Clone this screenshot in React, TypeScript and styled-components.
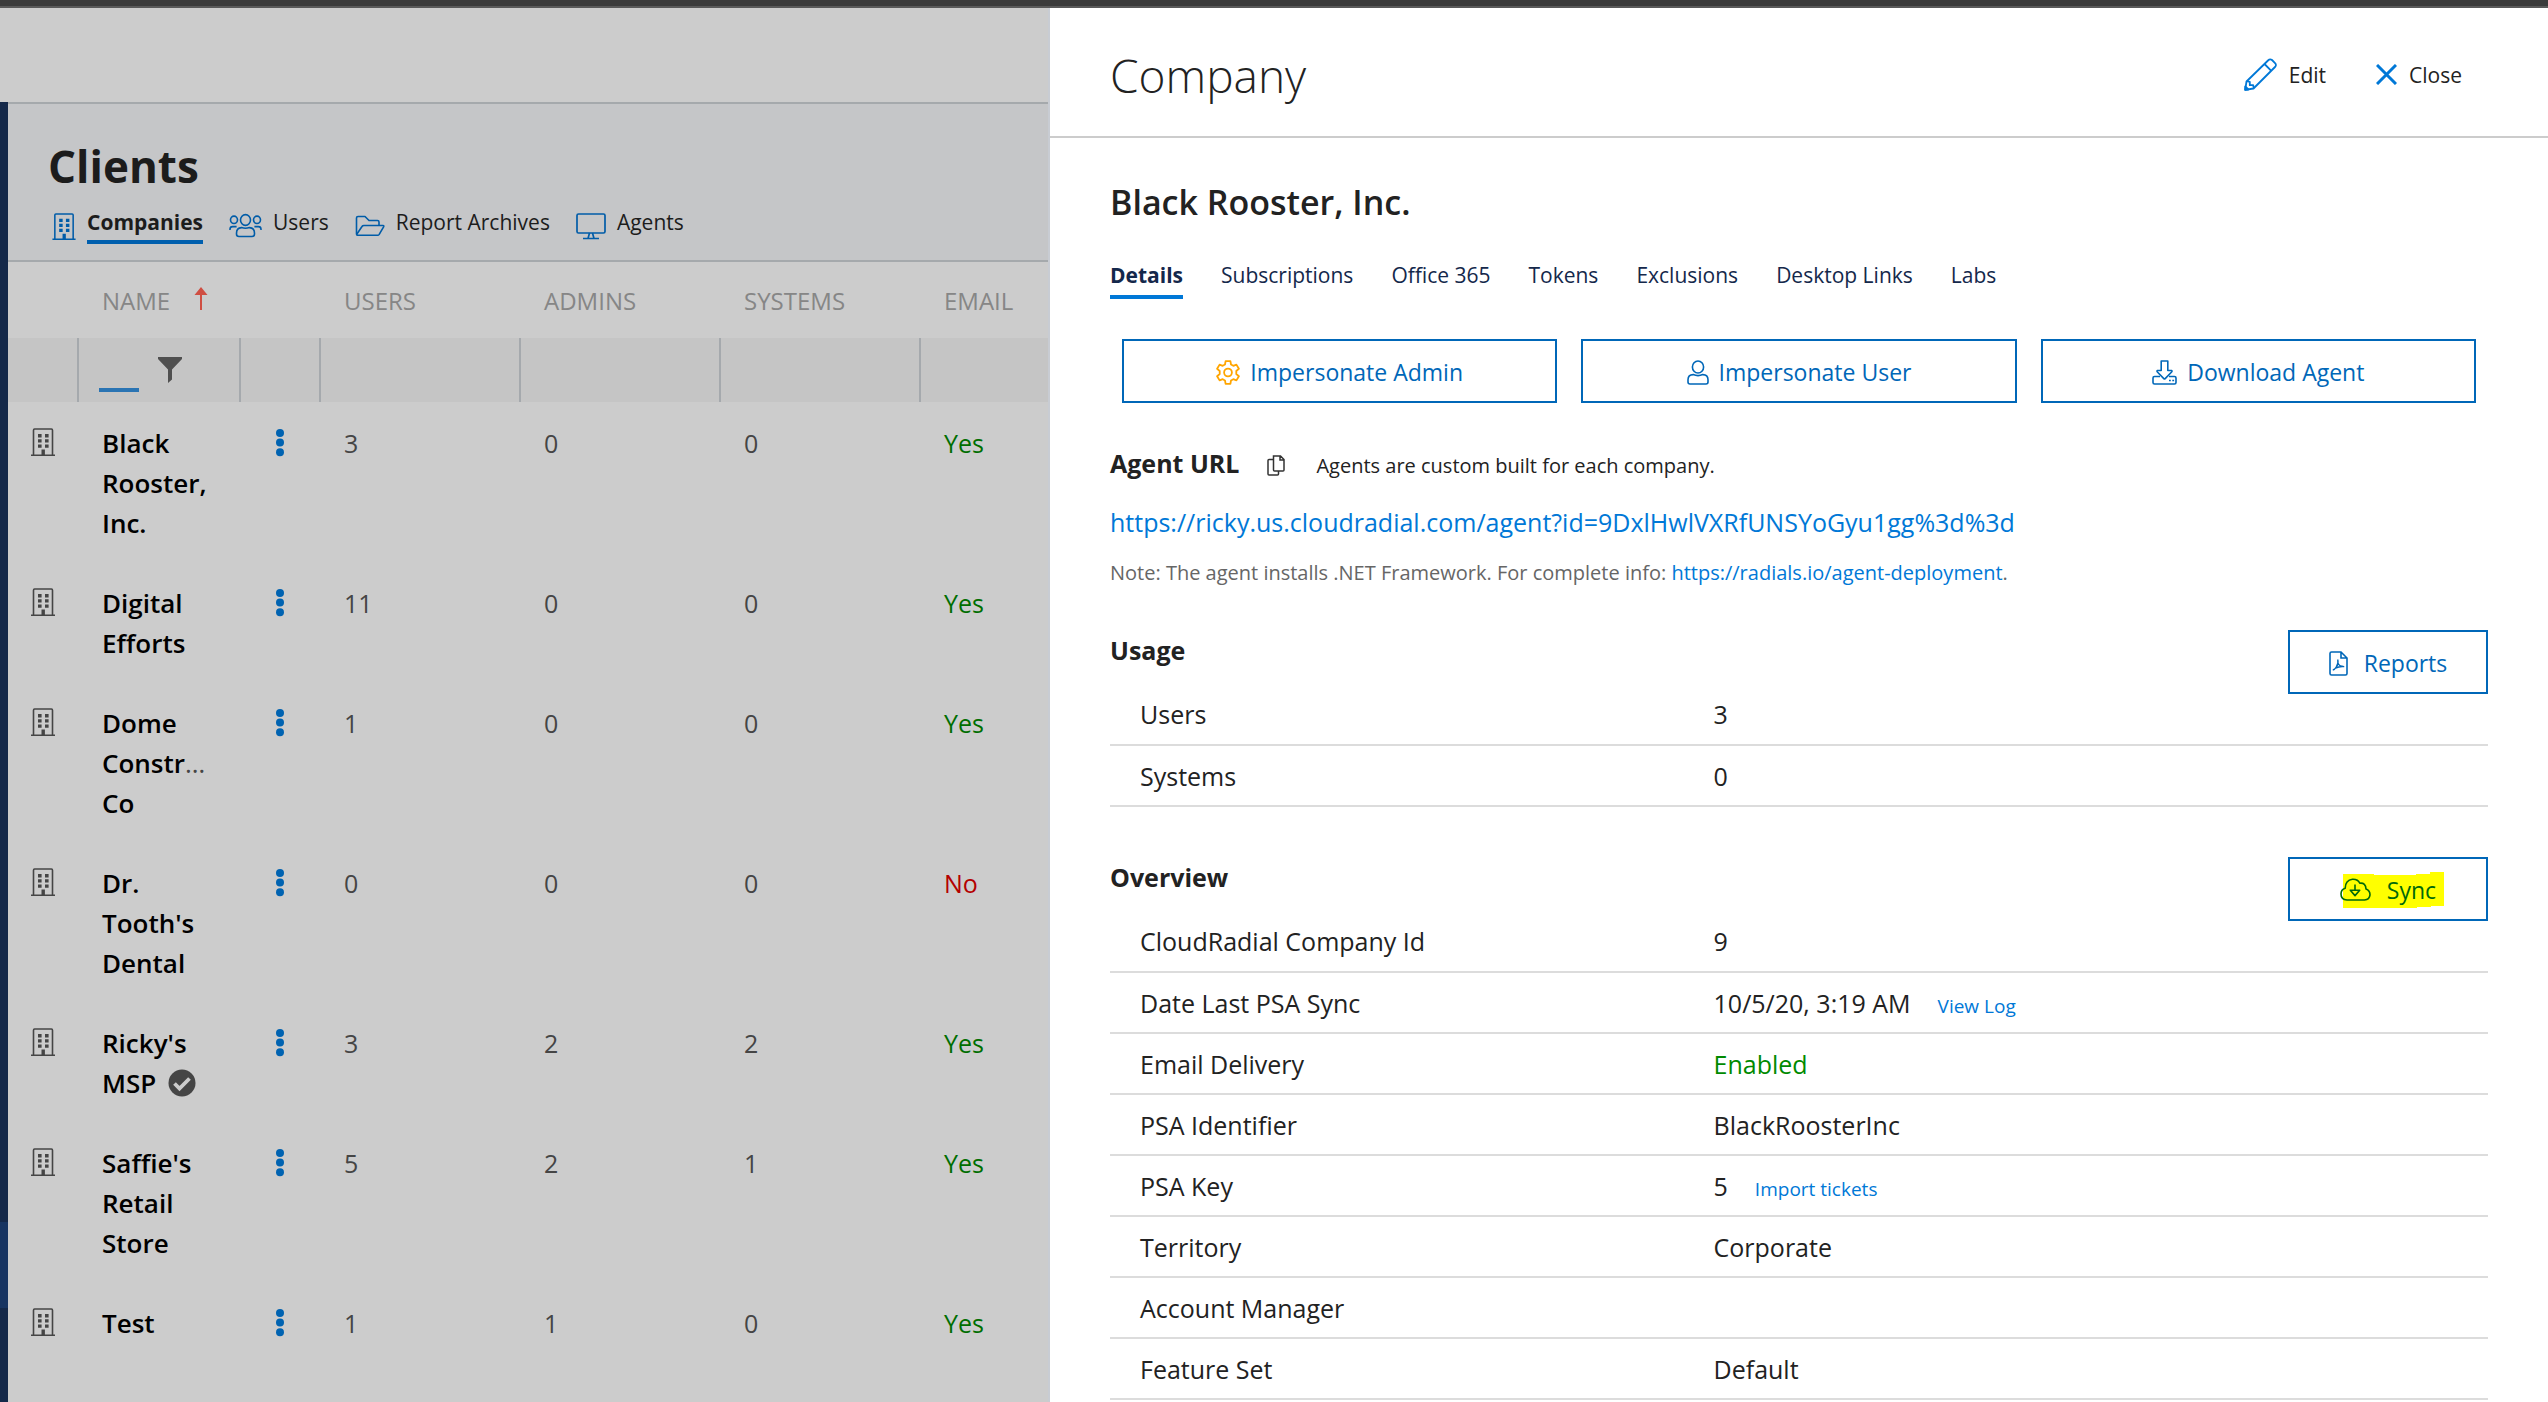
import React from "react";
import styled, { createGlobalStyle } from "styled-components";

const GlobalStyle = createGlobalStyle`
  *, *::before, *::after { box-sizing: border-box; }
  body {
    margin: 0;
    background: #fff;
    color: #222;
    font-family: "Open Sans", "Noto Sans", sans-serif;
    font-size: 25px;
  }
  h1, h2, h3, p { margin: 0; }
  button { font-family: inherit; cursor: pointer; }
  a { text-decoration: none; }
`;

const Page = styled.div`
  min-height: 100vh;
  display: flex;
  flex-direction: column;
`;

const WindowBar = styled.div`
  height: 8px;
  background: #3b3b3b;
  border-bottom: 2px solid #5a5a5a;
`;

const Split = styled.div`
  flex: 1;
  display: grid;
  grid-template-columns: minmax(0, 525fr) minmax(0, 749fr);
`;

/* ---------- dimmed client list ---------- */

const Backdrop = styled.div`
  display: flex;
  flex-direction: column;
  background: #cccccc;
  border-right: 2px solid #c8ccd3;
`;

const AppHeader = styled.div`
  height: 94px;
`;

const AppBody = styled.div`
  flex: 1;
  display: flex;
`;

const Sidebar = styled.div`
  width: 8px;
  padding-top: 1120px;
  background: #142849;
`;

const SidebarMarker = styled.div`
  height: 86px;
  background: #173461;
`;

const Workspace = styled.main`
  flex: 1;
  min-width: 0;
  border-top: 2px solid #a5a9ac;
`;

const ClientsHeader = styled.header`
  height: 158px;
  padding: 32px 40px 0;
  background: #c5c6c8;
  border-bottom: 2px solid #a5a9ac;
`;

const ClientsTitle = styled.h1`
  color: #1c1c1c;
  font-size: 44px;
  font-weight: 700;
  line-height: 60px;
`;

const ClientTabs = styled.nav`
  display: flex;
  gap: 26px;
  padding: 12px 0 0 4px;
`;

const ClientTab = styled.button<{ $active?: boolean }>`
  display: flex;
  align-items: flex-start;
  gap: 11px;
  padding: 0;
  border: 0;
  background: none;
  color: #1c1c1c;
  font-size: 21px;
  font-weight: ${(p) => (p.$active ? 700 : 400)};
  line-height: 28px;

  svg { color: #005ca8; margin-top: 5px; }
  span {
    padding-bottom: 4px;
    border-bottom: 4px solid ${(p) => (p.$active ? "#005fae" : "transparent")};
  }
`;

const Grid = styled.table`
  width: 100%;
  table-layout: fixed;
  border-collapse: collapse;
`;

const HeadCell = styled.th`
  height: 76px;
  padding: 0 0 0 24px;
  color: #868686;
  font-size: 24px;
  font-weight: 400;
  text-align: left;

  svg { margin-left: 24px; vertical-align: 0; color: #cf4e42; }
`;

const FilterCell = styled.td`
  height: 64px;
  padding: 0 0 0 20px;
  background: #c5c5c5;
  border-left: 2px solid #a5a9ad;

  &:first-child { border-left: 0; }
`;

const FilterBox = styled.div`
  display: flex;
  align-items: center;
  gap: 19px;
  height: 64px;
  color: #505050;
`;

const FilterInput = styled.input`
  width: 40px;
  height: 44px;
  padding: 0;
  border: 0;
  border-bottom: 4px solid #2a74b3;
  background: none;
  outline: none;
`;

const IconCell = styled.td`
  padding: 26px 0 0 23px;
  color: #454545;
  vertical-align: top;
  svg { display: block; }
`;

const NameCell = styled.td`
  padding: 21px 16px 19px 24px;
  color: #000;
  font-size: 26px;
  font-weight: 600;
  line-height: 40px;
  vertical-align: top;

  i { color: #454545; font-style: normal; font-weight: 400; }
  svg { margin-left: 5px; vertical-align: -4px; color: #454545; }
`;

const MenuCell = styled.td`
  padding: 27px 0 0 36px;
  vertical-align: top;
`;

const DotsButton = styled.button`
  display: block;
  padding: 0;
  border: 0;
  background: none;
  color: #0063b1;
  svg { display: block; }
`;

const ValueCell = styled.td<{ $color?: string }>`
  padding: 21px 0 19px 24px;
  color: ${(p) => p.$color ?? "#454545"};
  line-height: 40px;
  vertical-align: top;
`;

/* ---------- company drawer ---------- */

const Drawer = styled.aside`
  background: #fff;
`;

const DrawerHeader = styled.header`
  display: flex;
  align-items: center;
  justify-content: space-between;
  height: 130px;
  padding: 5px 86px 0 60px;
  border-bottom: 2px solid #ccc;
`;

const DrawerTitle = styled.h2`
  color: #222;
  font-size: 46px;
  font-weight: 300;
  line-height: 60px;
`;

const DrawerActions = styled.div`
  display: flex;
  align-items: center;
  gap: 50px;
`;

const ActionButton = styled.button`
  display: flex;
  align-items: center;
  gap: 12px;
  padding: 0;
  border: 0;
  background: none;
  color: #222;
  font-size: 21px;
  svg { color: #0078d7; }
`;

const DrawerBody = styled.div`
  padding: 40px 60px 0;
`;

const CompanyName = styled.h1`
  color: #222;
  font-size: 34px;
  font-weight: 600;
  line-height: 48px;
`;

const DetailTabs = styled.nav`
  display: flex;
  gap: 38px;
  padding-top: 33px;
`;

const DetailTab = styled.button<{ $active?: boolean }>`
  padding: 0 0 4px;
  border: 0;
  border-bottom: 4px solid ${(p) => (p.$active ? "#0078d7" : "transparent")};
  background: none;
  color: #14284b;
  font-size: 21px;
  font-weight: ${(p) => (p.$active ? 700 : 400)};
  line-height: 32px;
`;

const ButtonRow = styled.div`
  display: grid;
  grid-template-columns: repeat(3, 1fr);
  gap: 24px;
  padding: 40px 12px 0;
`;

const OutlineButton = styled.button<{ $gap?: number }>`
  display: flex;
  align-items: center;
  justify-content: center;
  gap: ${(p) => p.$gap ?? 10}px;
  height: 64px;
  padding: 2px 0 0;
  border: 2px solid #0067b8;
  background: #fff;
  color: #0067b8;
  font-size: 23px;
`;

const AgentRow = styled.div`
  display: flex;
  align-items: baseline;
  padding-top: 42px;
`;

const SectionTitle = styled.h3`
  font-size: 25px;
  font-weight: 700;
  line-height: 36px;
`;

const CopyButton = styled.button`
  align-self: flex-start;
  margin: 0 31px 0 28px;
  padding: 10px 0 0;
  border: 0;
  background: none;
  color: #333;
  svg { display: block; }
`;

const AgentHint = styled.p`
  font-size: 20px;
`;

const AgentUrl = styled.p`
  padding-top: 23px;
  line-height: 36px;
`;

const Note = styled.p`
  padding-top: 19px;
  color: #666;
  font-size: 20px;
  line-height: 28px;
`;

const Link = styled.a`
  color: #0078d7;
`;

const Section = styled.section`
  padding-top: 43px;

  & + & { padding-top: 50px; }
`;

const SectionHead = styled.div`
  display: flex;
  align-items: flex-start;
  justify-content: space-between;
  height: 54px;

  h3 { padding-top: 2px; }
  button { width: 200px; }
`;

const Facts = styled.table`
  width: 100%;
  table-layout: fixed;
  border-collapse: collapse;
`;

const FactLabel = styled.th`
  height: 61px;
  padding: 0 0 0 30px;
  border-bottom: 2px solid #dcdcdc;
  font-weight: 400;
  text-align: left;
`;

const FactValue = styled.td<{ $color?: string }>`
  height: 61px;
  padding: 0;
  border-bottom: 2px solid #dcdcdc;
  color: ${(p) => p.$color ?? "#222"};

  a { margin-left: 27px; font-size: 19px; }
`;

/* Marker-pen stroke: four overlapping swipes of slightly different height. */
const Highlight = styled.span`
  display: flex;
  align-items: center;
  gap: 16px;
  height: 36px;
  margin-right: -8px;
  padding-right: 8px;
  background:
    linear-gradient(#ff0, #ff0) 3px 2px / 31px 34px no-repeat,
    linear-gradient(#ff0, #ff0) 33px 3px / 44px 33px no-repeat,
    linear-gradient(#ff0, #ff0) 76px 2px / 15px 33px no-repeat,
    linear-gradient(#ff0, #ff0) 90px 0 / 14px 34px no-repeat;
  color: #00690a;
`;

/* ---------- icons ---------- */

const Building = ({ w = 24, h = 28 }: { w?: number; h?: number }) => (
  <svg width={w} height={h} viewBox="0 0 24 28" fill="none" stroke="currentColor" strokeWidth="1.6">
    <path d="M2.500 27V2.200Q2.500 1 3.600 1H20.400Q21.500 1 21.500 2.200V27M0 27.200H24" />
    <g fill="currentColor" stroke="none">
      <path d="M7 6h3.600v3.400H7zM14 6h3.600v3.400H14zM7 11.200h3.600v3.400H7zM14 11.200h3.600v3.400H14zM7 16.400h3.600v3.400H7zM14 16.400h3.600v3.400H14zM10.500 21.400h3.400v5.800h-3.400z" />
    </g>
  </svg>
);

const People = () => (
  <svg width="33" height="26" viewBox="0 0 33 26" fill="none" stroke="currentColor" strokeWidth="1.6">
    <ellipse cx="16.500" cy="7" rx="5" ry="5.400" />
    <ellipse cx="5" cy="6.800" rx="3.500" ry="3.700" />
    <ellipse cx="28" cy="6.800" rx="3.500" ry="3.700" />
    <path d="M7.500 21V20.200Q7.500 15 12.500 14.600Q16.500 16 20.500 14.600Q25.500 15 25.500 20.200V21Q25.500 23.500 23 23.500H10Q7.500 23.500 7.500 21Z" />
    <path d="M1 17V16.200Q1 13.600 3.600 13.600H7.600M32 17V16.200Q32 13.600 29.400 13.600H25.400" />
  </svg>
);

const Folder = () => (
  <svg width="30" height="26" viewBox="0 1 30 26" fill="none" stroke="currentColor" strokeWidth="1.6" strokeLinejoin="round">
    <path d="M1.500 22V6Q1.500 4.500 3 4.500H10L14 8.500H22.500Q24 8.500 24 10V13.500" />
    <path d="M1.600 22.500L7 14.500Q7.600 13.500 9 13.500H28Q29.300 13.500 28.600 14.800L24.200 22.400Q23.600 23.300 22.600 23.300H2.400Q1.500 23.300 1.500 22" />
  </svg>
);

const Monitor = () => (
  <svg width="30" height="27" viewBox="0 0 30 27" fill="none" stroke="currentColor" strokeWidth="1.7">
    <rect x="1" y="1" width="28" height="19" rx="1.500" />
    <path d="M13.500 20L12 25.500M16.500 20L18 25.500M7 25.500H23" />
  </svg>
);

const SortArrow = () => (
  <svg width="14" height="23" viewBox="0 0 14 23" fill="currentColor">
    <path d="M7 0L13.500 8H8V23H6V8H.500Z" />
  </svg>
);

const Funnel = () => (
  <svg width="24" height="26" viewBox="0 0 24 26" fill="currentColor">
    <path d="M0 0H24V2L14 12.500V22.500L10 26V12.500L0 2Z" />
  </svg>
);

const Dots = () => (
  <svg width="8" height="28" viewBox="0 0 8 28" fill="currentColor">
    <circle cx="4" cy="4" r="4" />
    <circle cx="4" cy="13.600" r="4" />
    <circle cx="4" cy="23.200" r="4" />
  </svg>
);

const Verified = () => (
  <svg width="28" height="28" viewBox="0 0 28 28">
    <circle cx="14" cy="14" r="13.500" fill="currentColor" />
    <path d="M6.500 14.500L11.500 19.500L21.500 9.500" fill="none" stroke="#ccc" strokeWidth="3.8" />
  </svg>
);

const Pencil = () => (
  <svg width="33" height="33" viewBox="0 0 33 33" fill="none" stroke="currentColor" strokeWidth="1.8" strokeLinejoin="round">
    <path d="M24 2.500Q26 .500 28 2L30.800 4.800Q33 7 31 9L9.500 30.500L1.200 31.800L2.500 23.500ZM20.500 6L27.300 12.800" />
    <path d="M2.800 23.200L5.800 23.800V27.200H9.200L9.800 30.200" />
    <path d="M1.200 31.800V28.500L4.500 31.500Z" fill="currentColor" />
  </svg>
);

const Cross = () => (
  <svg width="21" height="21" viewBox="0 0 21 21" fill="none" stroke="currentColor" strokeWidth="3">
    <path d="M1 1L20 20M20 1L1 20" />
  </svg>
);

const Gear = () => (
  <svg width="24" height="25" viewBox="0 0 24 25" fill="none" stroke="#ffa500" strokeWidth="1.8" strokeLinejoin="round">
    <path d="M9.600 1.200H14.400L15 4.500L17.300 5.800L20.400 4.600L22.900 8.800L20.300 11V14L22.900 16.200L20.400 20.400L17.300 19.200L15 20.500L14.400 23.800H9.600L9 20.500L6.700 19.200L3.600 20.400L1.100 16.200L3.700 14V11L1.100 8.800L3.600 4.600L6.700 5.800L9 4.500Z" />
    <circle cx="12" cy="12.500" r="3.900" />
  </svg>
);

const Person = () => (
  <svg width="22" height="25" viewBox="0 0 22 25" fill="none" stroke="currentColor" strokeWidth="1.6">
    <ellipse cx="11" cy="7" rx="5.600" ry="6" />
    <path d="M3 24Q1 24 1 22V19.800Q1 14.600 6.200 14.600Q11 16.600 15.800 14.600Q21 14.600 21 19.800V22Q21 24 19 24Z" />
  </svg>
);

const Download = () => (
  <svg width="25" height="25" viewBox="0 0 25 25" fill="none" stroke="currentColor" strokeWidth="1.6" strokeLinejoin="round">
    <path d="M9.200 1H15.800V10.500H19.500Q20.500 11 19.600 12L13.200 18.600Q12.500 19.200 11.800 18.600L5.400 12Q4.500 11 5.500 10.500H9.200Z" />
    <path d="M8 16.500H2.500Q1 16.500 1 18V22.500Q1 24 2.500 24H22.500Q24 24 24 22.500V18Q24 16.500 22.500 16.500H17" />
    <path d="M17 20.500h1.800M20.300 20.500h1.800" />
  </svg>
);

const Copy = () => (
  <svg width="18" height="21" viewBox="0 0 18 21" fill="none" stroke="currentColor" strokeWidth="1.5">
    <path d="M6.500 1H13.500L17 4.500V15Q17 16 16 16H7.500Q6.500 16 6.500 15V1ZM13 1V5H17" />
    <path d="M6.500 4.500H2Q1 4.500 1 5.500V19Q1 20 2 20H10.500Q11.500 20 11.500 19V16" />
  </svg>
);

const Pdf = () => (
  <svg width="19" height="25" viewBox="0 0 19 25" fill="none" stroke="currentColor" strokeWidth="1.6">
    <path d="M2.500 1H12L18 7V22.500Q18 24 16.500 24H2.500Q1 24 1 22.500V2.500Q1 1 2.500 1ZM12 1V7H18" />
    <path d="M8.800 8.500Q9.600 13 7.300 16Q5.800 18.600 3.800 19M8.900 12Q10.600 15.800 15.200 15.600Q10.500 15 6.500 17.200" strokeWidth="1.4" />
  </svg>
);

const CloudDown = () => (
  <svg width="31" height="24" viewBox="0 0 31 24" fill="none" stroke="currentColor" strokeWidth="1.6" strokeLinejoin="round">
    <path d="M7 22Q1 21.500 1 16Q1 11.500 5.200 10.300Q5.300 2 12.500 1.200Q18 1 19.800 5.200Q25.800 4.500 26 11Q30 12.500 30 16.800Q29.500 21.500 24.500 22Z" />
    <path d="M15 6.500V11.800M10.300 12.200H19.700L15 17.600Z" />
  </svg>
);

/* ---------- data ---------- */

const clients = [
  { name: "Black Rooster, Inc.", users: 3, admins: 0, systems: 0, email: true },
  { name: "Digital Efforts", users: 11, admins: 0, systems: 0, email: true },
  { name: "Dome Constr", rest: "Co", users: 1, admins: 0, systems: 0, email: true },
  { name: "Dr. Tooth's Dental", users: 0, admins: 0, systems: 0, email: false },
  { name: "Ricky's MSP", verified: true, users: 3, admins: 2, systems: 2, email: true },
  { name: "Saffie's Retail Store", users: 5, admins: 2, systems: 1, email: true },
  { name: "Test", users: 1, admins: 1, systems: 0, email: true },
];

const detailTabs = ["Details", "Subscriptions", "Office 365", "Tokens", "Exclusions", "Desktop Links", "Labs"];

type Fact = { label: string; value?: string; link?: string; color?: string };

const usage: Fact[] = [
  { label: "Users", value: "3" },
  { label: "Systems", value: "0" },
];

const overview: Fact[] = [
  { label: "CloudRadial Company Id", value: "9" },
  { label: "Date Last PSA Sync", value: "10/5/20, 3:19 AM", link: "View Log" },
  { label: "Email Delivery", value: "Enabled", color: "#008a00" },
  { label: "PSA Identifier", value: "BlackRoosterInc" },
  { label: "PSA Key", value: "5", link: "Import tickets" },
  { label: "Territory", value: "Corporate" },
  { label: "Account Manager" },
  { label: "Feature Set", value: "Default" },
];

const LabelColumn = styled.col`
  width: 43.8%;
`;

const FactTable = ({ facts }: { facts: Fact[] }) => (
  <Facts>
    <colgroup>
      <LabelColumn />
      <col />
    </colgroup>
    <tbody>
      {facts.map((f) => (
        <tr key={f.label}>
          <FactLabel scope="row">{f.label}</FactLabel>
          <FactValue $color={f.color}>
            {f.value}
            {f.link && <Link href="#">{f.link}</Link>}
          </FactValue>
        </tr>
      ))}
    </tbody>
  </Facts>
);

const GridColumn = styled.col<{ $width: number }>`
  width: ${(p) => p.$width}px;
`;

const columnWidths = [70, 162, 80, 200, 200, 200];

export default function App() {
  return (
    <Page>
      <GlobalStyle />
      <WindowBar />
      <Split>
        <Backdrop>
          <AppHeader />
          <AppBody>
            <Sidebar>
              <SidebarMarker />
            </Sidebar>
            <Workspace>
              <ClientsHeader>
                <ClientsTitle>Clients</ClientsTitle>
                <ClientTabs>
                  <ClientTab $active><Building w={24} h={27} /><span>Companies</span></ClientTab>
                  <ClientTab><People /><span>Users</span></ClientTab>
                  <ClientTab><Folder /><span>Report Archives</span></ClientTab>
                  <ClientTab><Monitor /><span>Agents</span></ClientTab>
                </ClientTabs>
              </ClientsHeader>
              <Grid>
                <colgroup>
                  {columnWidths.map((w, i) => <GridColumn key={i} $width={w} />)}
                  <col />
                </colgroup>
                <thead>
                  <tr>
                    <HeadCell />
                    <HeadCell>NAME<SortArrow /></HeadCell>
                    <HeadCell />
                    <HeadCell>USERS</HeadCell>
                    <HeadCell>ADMINS</HeadCell>
                    <HeadCell>SYSTEMS</HeadCell>
                    <HeadCell>EMAIL</HeadCell>
                  </tr>
                </thead>
                <tbody>
                  <tr>
                    <FilterCell />
                    <FilterCell>
                      <FilterBox>
                        <FilterInput aria-label="Filter by name" />
                        <Funnel />
                      </FilterBox>
                    </FilterCell>
                    <FilterCell /><FilterCell /><FilterCell /><FilterCell /><FilterCell />
                  </tr>
                  {clients.map((c) => (
                    <tr key={c.name}>
                      <IconCell><Building /></IconCell>
                      <NameCell>
                        {c.name}
                        {c.rest && <><i>…</i> {c.rest}</>}
                        {c.verified && <> <Verified /></>}
                      </NameCell>
                      <MenuCell>
                        <DotsButton aria-label={`Actions for ${c.name}`}><Dots /></DotsButton>
                      </MenuCell>
                      <ValueCell>{c.users}</ValueCell>
                      <ValueCell>{c.admins}</ValueCell>
                      <ValueCell>{c.systems}</ValueCell>
                      <ValueCell $color={c.email ? "#006e00" : "#b40000"}>{c.email ? "Yes" : "No"}</ValueCell>
                    </tr>
                  ))}
                </tbody>
              </Grid>
            </Workspace>
          </AppBody>
        </Backdrop>

        <Drawer>
          <DrawerHeader>
            <DrawerTitle>Company</DrawerTitle>
            <DrawerActions>
              <ActionButton><Pencil />Edit</ActionButton>
              <ActionButton><Cross />Close</ActionButton>
            </DrawerActions>
          </DrawerHeader>
          <DrawerBody>
            <CompanyName>Black Rooster, Inc.</CompanyName>
            <DetailTabs>
              {detailTabs.map((t, i) => <DetailTab key={t} $active={i === 0}>{t}</DetailTab>)}
            </DetailTabs>
            <ButtonRow>
              <OutlineButton><Gear />Impersonate Admin</OutlineButton>
              <OutlineButton><Person />Impersonate User</OutlineButton>
              <OutlineButton><Download />Download Agent</OutlineButton>
            </ButtonRow>
            <AgentRow>
              <SectionTitle>Agent URL</SectionTitle>
              <CopyButton aria-label="Copy agent URL"><Copy /></CopyButton>
              <AgentHint>Agents are custom built for each company.</AgentHint>
            </AgentRow>
            <AgentUrl>
              <Link href="#">https://ricky.us.cloudradial.com/agent?id=9DxlHwlVXRfUNSYoGyu1gg%3d%3d</Link>
            </AgentUrl>
            <Note>
              Note: The agent installs .NET Framework. For complete info: <Link href="#">https://radials.io/agent-deployment</Link>.
            </Note>
            <Section>
              <SectionHead>
                <SectionTitle>Usage</SectionTitle>
                <OutlineButton $gap={16}><Pdf />Reports</OutlineButton>
              </SectionHead>
              <FactTable facts={usage} />
            </Section>
            <Section>
              <SectionHead>
                <SectionTitle>Overview</SectionTitle>
                <OutlineButton><Highlight><CloudDown />Sync</Highlight></OutlineButton>
              </SectionHead>
              <FactTable facts={overview} />
            </Section>
          </DrawerBody>
        </Drawer>
      </Split>
    </Page>
  );
}
